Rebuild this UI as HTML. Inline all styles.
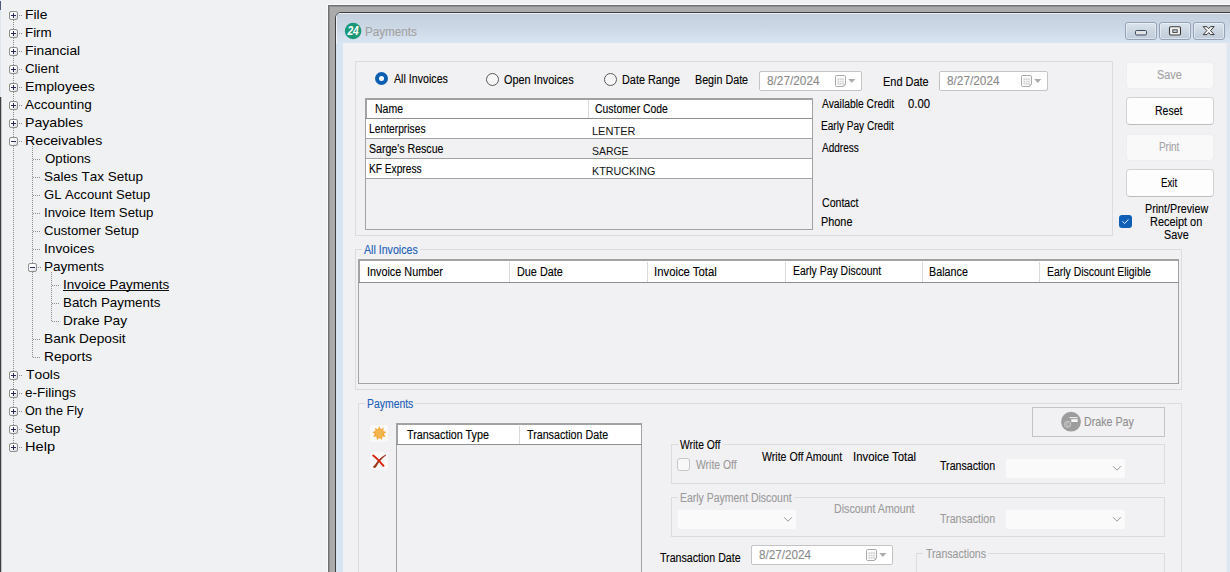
<!DOCTYPE html>
<html lang="en">
<head>
<meta charset="utf-8">
<title>Payments</title>
<style>
html,body{margin:0;padding:0}
body{width:1230px;height:572px;overflow:hidden;position:relative;background:#f0f1f3;font-family:"Liberation Sans",sans-serif}
*{box-sizing:border-box}
.abs,.t,.tr,.bx,.hd,.vd,.gb,.btn,.dp,.cb,.rad,.grid,.hl,.vl{position:absolute}
.t{white-space:nowrap;line-height:1;transform-origin:0 0;display:inline-block;-webkit-text-stroke:0.12px currentColor}
.tr{white-space:nowrap;line-height:1;font-size:13.33px;color:#111;font-kerning:none}
/* tree */
.bx{width:9px;height:9px;border:1px solid #8f8f8f;border-radius:2px;background:linear-gradient(135deg,#fff 0%,#fff 40%,#d8d8d8 100%)}
.bx .h{position:absolute;left:1px;top:3px;width:5px;height:1px;background:#2a2a5a}
.bx .v{position:absolute;left:3px;top:1px;width:1px;height:5px;background:#2a2a5a}
.hd{height:1px;background:repeating-linear-gradient(90deg,#8c8c8c 0 1px,transparent 1px 2px)}
.vd{width:1px;background:repeating-linear-gradient(180deg,#8c8c8c 0 1px,transparent 1px 2px)}
/* window */
#frame{left:328px;top:5px;width:910px;height:580px;background:#acabab;border:1px solid #707070;box-shadow:inset 0 0 0 1px #8e8e8e,-1px -1px 0 #fafafa}
#win{left:335px;top:12px;width:900px;height:570px;border:1px solid #3e3e3e;border-radius:6px 0 0 0;background:#d7e4f2;overflow:hidden}
#title{left:0;top:0;width:900px;height:31px;background:linear-gradient(180deg,#c3cfdc 0%,#cbd7e5 45%,#dbe6f4 100%);box-shadow:inset 1px 1px 0 rgba(255,255,255,.7)}
#client{left:343px;top:43px;width:884px;height:540px;background:#f1f1f3}
.gb{border:1px solid #dcdcdc}
.btn{border:1px solid #d2d2d2;border-bottom-color:#bdbdbd;border-radius:4px;background:#fdfdfd}
.btn.dis{background:#f9f9fa;border-color:#eeeef0}
.dp{border:1px solid #c4c4c4;border-radius:2px;background:#fff}
.combo{position:absolute;background:#fafafa;border-radius:2px}
.grid{border:1px solid #a2a2a2}
.hl{height:1px;background:#a2a2a2}
.vl{width:1px;background:#dadada}
.rad{width:13px;height:13px;border-radius:50%;border:1px solid #5a5a5a;background:#f6f6f6}
.rad.on{border:4px solid #0c5eb3;background:#fff}
.tb{position:absolute;top:22px;height:18px;border:1px solid #95a2b6;border-radius:3px;background:linear-gradient(180deg,#dbe4ee 0%,#cbd6e2 50%,#c0ccda 100%);box-shadow:inset 0 0 0 1px rgba(255,255,255,.45)}
</style>
</head>
<body>
<!-- left tree pane -->
<div class="abs" style="left:0;top:97px;width:2px;height:475px;background:linear-gradient(90deg,#3e3e3e 0 1px,#c4c4c6 1px 2px)"></div>
<div class="abs" style="left:0;top:10px;width:1px;height:87px;background:#dfe6ee"></div>
<div class="abs" style="left:0;top:1px;width:1px;height:9px;background:#4a5a78"></div>

<i class="vd" style="left:13px;top:20px;height:427px"></i>
<i class="vd" style="left:32px;top:146px;height:212px"></i>
<i class="vd" style="left:51px;top:272px;height:50px"></i>
<span class="bx" style="left:9px;top:11px"><i class="h"></i><i class="v"></i></span>
<i class="hd" style="left:19px;top:15px;width:4px"></i>
<span class="bx" style="left:9px;top:29px"><i class="h"></i><i class="v"></i></span>
<i class="hd" style="left:19px;top:33px;width:4px"></i>
<span class="bx" style="left:9px;top:47px"><i class="h"></i><i class="v"></i></span>
<i class="hd" style="left:19px;top:51px;width:4px"></i>
<span class="bx" style="left:9px;top:65px"><i class="h"></i><i class="v"></i></span>
<i class="hd" style="left:19px;top:69px;width:4px"></i>
<span class="bx" style="left:9px;top:83px"><i class="h"></i><i class="v"></i></span>
<i class="hd" style="left:19px;top:87px;width:4px"></i>
<span class="bx" style="left:9px;top:101px"><i class="h"></i><i class="v"></i></span>
<i class="hd" style="left:19px;top:105px;width:4px"></i>
<span class="bx" style="left:9px;top:119px"><i class="h"></i><i class="v"></i></span>
<i class="hd" style="left:19px;top:123px;width:4px"></i>
<span class="bx" style="left:9px;top:137px"><i class="h"></i></span>
<i class="hd" style="left:19px;top:141px;width:4px"></i>
<i class="hd" style="left:33px;top:159px;width:8px"></i>
<i class="hd" style="left:33px;top:177px;width:8px"></i>
<i class="hd" style="left:33px;top:195px;width:8px"></i>
<i class="hd" style="left:33px;top:213px;width:8px"></i>
<i class="hd" style="left:33px;top:231px;width:8px"></i>
<i class="hd" style="left:33px;top:249px;width:8px"></i>
<span class="bx" style="left:28px;top:263px"><i class="h"></i></span>
<i class="hd" style="left:38px;top:267px;width:4px"></i>
<i class="abs" style="left:63px;top:290px;width:106px;height:1px;background:#111"></i>
<i class="hd" style="left:52px;top:285px;width:8px"></i>
<i class="hd" style="left:52px;top:303px;width:8px"></i>
<i class="hd" style="left:52px;top:321px;width:8px"></i>
<i class="hd" style="left:33px;top:339px;width:8px"></i>
<i class="hd" style="left:33px;top:357px;width:8px"></i>
<span class="bx" style="left:9px;top:371px"><i class="h"></i><i class="v"></i></span>
<i class="hd" style="left:19px;top:375px;width:4px"></i>
<span class="bx" style="left:9px;top:389px"><i class="h"></i><i class="v"></i></span>
<i class="hd" style="left:19px;top:393px;width:4px"></i>
<span class="bx" style="left:9px;top:407px"><i class="h"></i><i class="v"></i></span>
<i class="hd" style="left:19px;top:411px;width:4px"></i>
<span class="bx" style="left:9px;top:425px"><i class="h"></i><i class="v"></i></span>
<i class="hd" style="left:19px;top:429px;width:4px"></i>
<span class="bx" style="left:9px;top:443px"><i class="h"></i><i class="v"></i></span>
<i class="hd" style="left:19px;top:447px;width:4px"></i>
<!-- window frame -->
<div id="frame" class="abs"></div>
<div id="win" class="abs"><div id="title" class="abs"></div></div>
<div id="client" class="abs"></div>
<div class="abs" style="left:1226px;top:43px;width:4px;height:529px;background:linear-gradient(90deg,#e9edf2 0 1px,#dfe6ee 1px 4px)"></div>
<!-- title bar icon + buttons -->
<svg class="abs" style="left:344px;top:22px" width="18" height="18" viewBox="0 0 18 18"><circle cx="9.100" cy="9" r="8.300" fill="#1a9877"/><text x="3.400" y="13.300" font-family="Liberation Sans, sans-serif" font-size="12.600" font-weight="bold" font-style="italic" fill="#fff" textLength="11.400" lengthAdjust="spacingAndGlyphs">24</text></svg>
<div class="tb" style="left:1125px;width:32px"><svg width="30" height="16" viewBox="0 0 30 16" style="position:absolute;left:0;top:0"><rect x="9.500" y="7.500" width="11" height="4.500" rx="1.200" fill="#e2e4e4" stroke="#3b4663" stroke-width="1"/></svg></div>
<div class="tb" style="left:1159px;width:32px"><svg width="30" height="16" viewBox="0 0 30 16" style="position:absolute;left:0;top:0"><rect x="9.5" y="3.8" width="11" height="8.2" rx="1.2" fill="#f2f2f2" stroke="#3a3a3a" stroke-width="1.1"/><rect x="12.8" y="6.8" width="4.4" height="2.6" fill="#c9d3de" stroke="#3a3a3a" stroke-width="0.9"/></svg></div>
<div class="tb" style="left:1193px;width:32px"><svg width="30" height="16" viewBox="0 0 30 16" style="position:absolute;left:0;top:0"><path d="M9.200 3.600h3.700l1.800 2 1.800-2h3.700l-3.700 4 3.700 4h-3.700l-1.800-2-1.800 2H9.200l3.700-4z" fill="#f6f6f6" stroke="#3a3a3a" stroke-width="1" stroke-linejoin="round"/></svg></div>

<!-- group box 1 -->
<div class="gb" style="left:355px;top:61px;width:758px;height:175px"></div>
<div class="rad on" style="left:375px;top:72px"></div>
<div class="rad" style="left:486px;top:73px"></div>
<div class="rad" style="left:604px;top:73px"></div>
<div class="dp" style="left:759px;top:71px;width:103px;height:20px"></div>
<div class="dp" style="left:939px;top:71px;width:109px;height:20px"></div>
<svg class="abs cal" style="left:834px;top:74px" width="24" height="14" viewBox="0 0 24 14"><path d="M2.700 1.500h7.600a1.200 1.200 0 0 1 1.200 1.200v7.800l-2 2h-6.800a1.200 1.200 0 0 1-1.200-1.200v-8.600a1.200 1.200 0 0 1 1.200-1.200z" fill="#fcfcfc" stroke="#aaaaaa" stroke-width="1"/><path d="M11.500 10.500h-2v2" fill="none" stroke="#c4c4c4" stroke-width="0.800"/><rect x="3.600" y="4.400" width="6.200" height="6.200" fill="#d0d0d0"/><path d="M5.700 4.400v6.200M7.800 4.400v6.200M3.600 6.500h6.200M3.600 8.600h6.200" stroke="#fcfcfc" stroke-width="0.700" fill="none"/><path d="M14.200 5h7.200l-3.600 3.900z" fill="#adadad"/></svg>
<svg class="abs cal" style="left:1020px;top:74px" width="24" height="14" viewBox="0 0 24 14"><path d="M2.700 1.500h7.600a1.200 1.200 0 0 1 1.200 1.200v7.800l-2 2h-6.800a1.200 1.200 0 0 1-1.200-1.200v-8.600a1.200 1.200 0 0 1 1.200-1.200z" fill="#fcfcfc" stroke="#aaaaaa" stroke-width="1"/><path d="M11.500 10.500h-2v2" fill="none" stroke="#c4c4c4" stroke-width="0.800"/><rect x="3.600" y="4.400" width="6.200" height="6.200" fill="#d0d0d0"/><path d="M5.700 4.400v6.200M7.800 4.400v6.200M3.600 6.500h6.200M3.600 8.600h6.200" stroke="#fcfcfc" stroke-width="0.700" fill="none"/><path d="M14.200 5h7.200l-3.600 3.900z" fill="#adadad"/></svg>


<!-- customer grid -->
<div class="grid" style="left:365px;top:98px;width:448px;height:132px"></div>
<div class="abs" style="left:366px;top:99px;width:446px;height:80px;background:#fff"></div>
<div class="abs" style="left:366px;top:139px;width:446px;height:19px;background:#f1f1f4"></div>
<div class="abs" style="left:365px;top:98px;width:448px;height:2px;background:#a2a2a2"></div>
<div class="abs" style="left:365px;top:98px;width:2px;height:21px;background:#a2a2a2"></div>
<div class="hl" style="left:365px;top:118px;width:448px;background:#8f8f8f"></div>
<div class="hl" style="left:365px;top:138px;width:448px"></div>
<div class="hl" style="left:365px;top:158px;width:448px"></div>
<div class="hl" style="left:365px;top:178px;width:448px"></div>
<div class="vl" style="left:588px;top:100px;height:18px"></div>

<!-- right buttons -->
<div class="btn dis" style="left:1126px;top:62px;width:88px;height:27px"></div>
<div class="btn" style="left:1126px;top:97px;width:88px;height:28px"></div>
<div class="btn dis" style="left:1126px;top:134px;width:88px;height:27px"></div>
<div class="btn" style="left:1126px;top:169px;width:88px;height:28px"></div>
<svg class="abs" style="left:1119px;top:215px" width="13" height="13" viewBox="0 0 13 13"><rect width="13" height="13" rx="3" fill="#0f5fb6"/><path d="M3.700 6.600l1.900 1.900 3.600-3.800" fill="none" stroke="#fff" stroke-width="0.900" stroke-linecap="round" stroke-linejoin="round"/></svg>

<!-- All Invoices group -->
<div class="gb" style="left:355px;top:249px;width:827px;height:141px"></div>
<div class="abs" style="left:362px;top:246px;width:58px;height:8px;background:#f1f1f3"></div>
<div class="grid" style="left:358px;top:260px;width:821px;height:124px"></div>
<div class="abs" style="left:359px;top:261px;width:819px;height:21px;background:#fff"></div>
<div class="abs" style="left:358px;top:259px;width:821px;height:2px;background:#a2a2a2"></div>
<div class="abs" style="left:358px;top:259px;width:2px;height:24px;background:#a2a2a2"></div>
<div class="hl" style="left:358px;top:282px;width:821px;background:#8f8f8f"></div>
<div class="vl" style="left:509px;top:262px;height:20px"></div>
<div class="vl" style="left:647px;top:262px;height:20px"></div>
<div class="vl" style="left:785px;top:262px;height:20px"></div>
<div class="vl" style="left:922px;top:262px;height:20px"></div>
<div class="vl" style="left:1039px;top:262px;height:20px"></div>

<!-- Payments group -->
<div class="gb" style="left:358px;top:403px;width:824px;height:200px"></div>
<div class="abs" style="left:365px;top:400px;width:50px;height:8px;background:#f1f1f3"></div>
<div class="abs" style="left:370px;top:425px;width:18px;height:17px;background:#f9f9f9;border-radius:3px"></div>
<div class="abs" style="left:370px;top:452px;width:18px;height:18px;background:#f9f9f9;border-radius:3px"></div>
<svg class="abs" style="left:371px;top:425px" width="17" height="17" viewBox="0 0 17 17"><path d="M8.3 1.2l1.5 3 3-1.4-.6 3.2 3.2.9-2.6 2 1.8 2.8-3.3-.2-.3 3.3-2.6-2.1-2.5 2.200-.5-3.300-3.300.2 1.800-2.800-2.600-2 3.200-.9-.6-3.200 3 1.400z" fill="#f3a63a"/><circle cx="8.3" cy="8.300" r="3.600" fill="#f6b64e"/></svg>
<svg class="abs" style="left:371px;top:453px" width="17" height="17" viewBox="0 0 17 17"><path d="M14.800 1.600C11.500 3 7.500 6.500 5 10.200 4 11.800 3 13 2 13.600c.3 1.600 2 1.600 2.900.6 1-1.300 1.700-2.700 2.700-4.200 1.900-2.800 4.700-5.800 7.400-7.600z" fill="#a0361c"/><path d="M2.200 2.500c2.600 1.600 5.800 5.200 10.300 10.300" fill="none" stroke="#d8240c" stroke-width="2" stroke-linecap="round"/></svg>
<div class="grid" style="left:396px;top:424px;width:246px;height:170px"></div>
<div class="abs" style="left:397px;top:425px;width:244px;height:19px;background:#fff"></div>
<div class="abs" style="left:396px;top:423px;width:246px;height:2px;background:#a2a2a2"></div>
<div class="abs" style="left:396px;top:423px;width:2px;height:22px;background:#a2a2a2"></div>
<div class="hl" style="left:396px;top:444px;width:246px;background:#8f8f8f"></div>
<div class="vl" style="left:519px;top:426px;height:18px"></div>

<!-- Drake Pay button -->
<div class="abs" style="left:1032px;top:407px;width:133px;height:30px;border:1px solid #c4c4c4"></div>
<svg class="abs" style="left:1061px;top:411px" width="20" height="21" viewBox="0 0 20 21"><circle cx="10" cy="10.700" r="9.900" fill="#9c9c9c"/><rect x="8.500" y="6.100" width="8.200" height="1.100" fill="#f0f0f0"/><rect x="10.300" y="8.200" width="6.400" height="2.800" fill="#f6f6f6"/><circle cx="6.600" cy="13.300" r="3.100" fill="#a4a4a4" stroke="#cfcfcf" stroke-width="0.900"/><path d="M7.600 11.800c-1.400-.5-2.300.400-2.300 1.500s.9 2 2.300 1.500" fill="none" stroke="#d6d6d6" stroke-width="0.700"/></svg>

<!-- Write Off group -->
<div class="gb" style="left:671px;top:444px;width:494px;height:40px"></div>
<div class="abs" style="left:678px;top:441px;width:45px;height:8px;background:#f1f1f3"></div>
<div class="abs" style="left:677px;top:458px;width:13px;height:13px;border:1px solid #c6c6c6;border-radius:3px;background:#f8f8f8"></div>
<div class="combo" style="left:1006px;top:459px;width:119px;height:19px"></div>
<svg class="abs" style="left:1112px;top:465px" width="10" height="7" viewBox="0 0 10 7"><path d="M1 1.200l4 4 4-4" fill="none" stroke="#9a9a9a" stroke-width="1"/></svg>

<!-- Early Payment Discount group -->
<div class="gb" style="left:671px;top:497px;width:494px;height:40px"></div>
<div class="abs" style="left:678px;top:494px;width:116px;height:8px;background:#f1f1f3"></div>
<div class="combo" style="left:678px;top:510px;width:118px;height:19px"></div>
<svg class="abs" style="left:783px;top:516px" width="10" height="7" viewBox="0 0 10 7"><path d="M1 1.200l4 4 4-4" fill="none" stroke="#9a9a9a" stroke-width="1"/></svg>
<div class="combo" style="left:1006px;top:510px;width:119px;height:19px"></div>
<svg class="abs" style="left:1112px;top:516px" width="10" height="7" viewBox="0 0 10 7"><path d="M1 1.200l4 4 4-4" fill="none" stroke="#9a9a9a" stroke-width="1"/></svg>

<!-- Transaction date + Transactions group -->
<div class="dp" style="left:751px;top:545px;width:142px;height:20px"></div>
<svg class="abs cal" style="left:865px;top:548px" width="24" height="14" viewBox="0 0 24 14"><path d="M2.700 1.500h7.600a1.200 1.200 0 0 1 1.200 1.200v7.800l-2 2h-6.800a1.200 1.200 0 0 1-1.200-1.200v-8.600a1.200 1.200 0 0 1 1.200-1.200z" fill="#fcfcfc" stroke="#aaaaaa" stroke-width="1"/><path d="M11.500 10.500h-2v2" fill="none" stroke="#c4c4c4" stroke-width="0.800"/><rect x="3.600" y="4.400" width="6.200" height="6.200" fill="#d0d0d0"/><path d="M5.700 4.400v6.200M7.800 4.400v6.200M3.600 6.500h6.200M3.600 8.600h6.200" stroke="#fcfcfc" stroke-width="0.700" fill="none"/><path d="M14.200 5h7.200l-3.600 3.900z" fill="#adadad"/></svg>
<div class="gb" style="left:916px;top:553px;width:249px;height:40px"></div>
<div class="abs" style="left:923px;top:550px;width:65px;height:8px;background:#f1f1f3"></div>

<span class="t" style="left:364.8px;top:25px;font-size:12px;line-height:14px;color:#a2a2a2;transform:scaleX(0.9712);">Payments</span>
<span class="t" style="left:394.0px;top:72px;font-size:12.5px;line-height:14px;color:#000;transform:scaleX(0.8526);">All Invoices</span>
<span class="t" style="left:504.1px;top:73px;font-size:12.5px;line-height:14px;color:#000;transform:scaleX(0.8709);">Open Invoices</span>
<span class="t" style="left:622.4px;top:73px;font-size:12.5px;line-height:14px;color:#000;transform:scaleX(0.8690);">Date Range</span>
<span class="t" style="left:695.4px;top:73px;font-size:12.5px;line-height:14px;color:#000;transform:scaleX(0.8581);">Begin Date</span>
<span class="t" style="left:766.5px;top:74px;font-size:12px;line-height:14px;color:#8a8a8a;transform:scaleX(0.9848);">8/27/2024</span>
<span class="t" style="left:883.1px;top:75px;font-size:12.5px;line-height:14px;color:#000;transform:scaleX(0.8772);">End Date</span>
<span class="t" style="left:946.5px;top:74px;font-size:12px;line-height:14px;color:#8a8a8a;transform:scaleX(0.9848);">8/27/2024</span>
<span class="t" style="left:374.5px;top:102px;font-size:12.5px;line-height:14px;color:#000;transform:scaleX(0.8409);">Name</span>
<span class="t" style="left:595.1px;top:102px;font-size:12.5px;line-height:14px;color:#000;transform:scaleX(0.8324);">Customer Code</span>
<span class="t" style="left:368.9px;top:122px;font-size:12.5px;line-height:14px;color:#000;transform:scaleX(0.8223);">Lenterprises</span>
<span class="t" style="left:369.1px;top:142px;font-size:12.5px;line-height:14px;color:#000;transform:scaleX(0.8474);">Sarge&#x27;s Rescue</span>
<span class="t" style="left:368.9px;top:162px;font-size:12.5px;line-height:14px;color:#000;transform:scaleX(0.8142);">KF Express</span>
<span class="t" style="left:591.6px;top:125px;font-size:11.6px;line-height:12px;color:#111;transform:scaleX(0.9492);-webkit-text-stroke:0;">LENTER</span>
<span class="t" style="left:592.0px;top:145px;font-size:11.6px;line-height:12px;color:#111;transform:scaleX(0.9006);-webkit-text-stroke:0;">SARGE</span>
<span class="t" style="left:591.6px;top:165px;font-size:11.6px;line-height:12px;color:#111;transform:scaleX(0.9278);-webkit-text-stroke:0;">KTRUCKING</span>
<span class="t" style="left:822.0px;top:97px;font-size:12.5px;line-height:14px;color:#000;transform:scaleX(0.8252);">Available Credit</span>
<span class="t" style="left:907.5px;top:97px;font-size:12.5px;line-height:14px;color:#000;transform:scaleX(0.9032);">0.00</span>
<span class="t" style="left:821.2px;top:119px;font-size:12.5px;line-height:14px;color:#000;transform:scaleX(0.8067);">Early Pay Credit</span>
<span class="t" style="left:822.0px;top:141px;font-size:12.5px;line-height:14px;color:#000;transform:scaleX(0.8022);">Address</span>
<span class="t" style="left:821.6px;top:196px;font-size:12.5px;line-height:14px;color:#000;transform:scaleX(0.8471);">Contact</span>
<span class="t" style="left:821.1px;top:215px;font-size:12.5px;line-height:14px;color:#000;transform:scaleX(0.8696);">Phone</span>
<span class="t" style="left:1156.6px;top:68px;font-size:12.5px;line-height:14px;color:#a3a3a3;transform:scaleX(0.8697);">Save</span>
<span class="t" style="left:1154.7px;top:104px;font-size:12.5px;line-height:14px;color:#000;transform:scaleX(0.8413);">Reset</span>
<span class="t" style="left:1158.6px;top:140px;font-size:12.5px;line-height:14px;color:#a3a3a3;transform:scaleX(0.7919);">Print</span>
<span class="t" style="left:1160.8px;top:176px;font-size:12.5px;line-height:14px;color:#000;transform:scaleX(0.7797);">Exit</span>
<span class="t" style="left:1144.7px;top:202px;font-size:12.5px;line-height:14px;color:#000;transform:scaleX(0.8577);">Print/Preview</span>
<span class="t" style="left:1150.4px;top:215px;font-size:12.5px;line-height:14px;color:#000;transform:scaleX(0.8741);">Receipt on</span>
<span class="t" style="left:1163.8px;top:228px;font-size:12.5px;line-height:14px;color:#000;transform:scaleX(0.8661);">Save</span>
<span class="t" style="left:364.2px;top:243px;font-size:12.5px;line-height:14px;color:#2060b8;transform:scaleX(0.8494);">All Invoices</span>
<span class="t" style="left:367.2px;top:265px;font-size:12.5px;line-height:14px;color:#000;transform:scaleX(0.8663);">Invoice Number</span>
<span class="t" style="left:516.6px;top:265px;font-size:12.5px;line-height:14px;color:#000;transform:scaleX(0.8683);">Due Date</span>
<span class="t" style="left:654.2px;top:265px;font-size:12.5px;line-height:14px;color:#000;transform:scaleX(0.9071);">Invoice Total</span>
<span class="t" style="left:792.9px;top:264px;font-size:12.5px;line-height:14px;color:#000;transform:scaleX(0.8354);">Early Pay Discount</span>
<span class="t" style="left:929.4px;top:265px;font-size:12.5px;line-height:14px;color:#000;transform:scaleX(0.8617);">Balance</span>
<span class="t" style="left:1046.7px;top:265px;font-size:12.5px;line-height:14px;color:#000;transform:scaleX(0.8350);">Early Discount Eligible</span>
<span class="t" style="left:366.7px;top:397px;font-size:12.5px;line-height:14px;color:#2060b8;transform:scaleX(0.8333);">Payments</span>
<span class="t" style="left:406.5px;top:428px;font-size:12.5px;line-height:14px;color:#000;transform:scaleX(0.8603);">Transaction Type</span>
<span class="t" style="left:527.3px;top:428px;font-size:12.5px;line-height:14px;color:#000;transform:scaleX(0.8564);">Transaction Date</span>
<span class="t" style="left:1083.9px;top:414px;font-size:13.3px;line-height:15px;color:#8f8f8f;transform:scaleX(0.8033);">Drake Pay</span>
<span class="t" style="left:680.3px;top:438px;font-size:12.5px;line-height:14px;color:#000;transform:scaleX(0.8265);">Write Off</span>
<span class="t" style="left:696.3px;top:458px;font-size:12.5px;line-height:14px;color:#9b9b9b;transform:scaleX(0.8306);">Write Off</span>
<span class="t" style="left:762.0px;top:450px;font-size:12.5px;line-height:14px;color:#000;transform:scaleX(0.8464);">Write Off Amount</span>
<span class="t" style="left:853.1px;top:450px;font-size:12.5px;line-height:14px;color:#000;transform:scaleX(0.9115);">Invoice Total</span>
<span class="t" style="left:939.8px;top:459px;font-size:12.5px;line-height:14px;color:#000;transform:scaleX(0.8502);">Transaction</span>
<span class="t" style="left:679.7px;top:491px;font-size:12.5px;line-height:14px;color:#9b9b9b;transform:scaleX(0.8371);">Early Payment Discount</span>
<span class="t" style="left:834.4px;top:502px;font-size:12.5px;line-height:14px;color:#9b9b9b;transform:scaleX(0.8524);">Discount Amount</span>
<span class="t" style="left:939.8px;top:512px;font-size:12.5px;line-height:14px;color:#9b9b9b;transform:scaleX(0.8502);">Transaction</span>
<span class="t" style="left:659.8px;top:551px;font-size:12.5px;line-height:14px;color:#000;transform:scaleX(0.8511);">Transaction Date</span>
<span class="t" style="left:759.2px;top:548px;font-size:12px;line-height:14px;color:#8a8a8a;transform:scaleX(0.9733);">8/27/2024</span>
<span class="t" style="left:925.6px;top:547px;font-size:12.5px;line-height:14px;color:#9b9b9b;transform:scaleX(0.8440);">Transactions</span>
<span class="t" style="left:25.0px;top:7px;font-size:13.33px;line-height:15px;color:#000;transform:scaleX(1.0400);font-kerning:none;-webkit-text-stroke:0;">File</span>
<span class="t" style="left:25.0px;top:25px;font-size:13.33px;line-height:15px;color:#000;transform:scaleX(1.0020);font-kerning:none;-webkit-text-stroke:0;">Firm</span>
<span class="t" style="left:25.0px;top:43px;font-size:13.33px;line-height:15px;color:#000;transform:scaleX(1.0330);font-kerning:none;-webkit-text-stroke:0;">Financial</span>
<span class="t" style="left:25.0px;top:61px;font-size:13.33px;line-height:15px;color:#000;transform:scaleX(0.9985);font-kerning:none;-webkit-text-stroke:0;">Client</span>
<span class="t" style="left:25.0px;top:79px;font-size:13.33px;line-height:15px;color:#000;transform:scaleX(1.0574);font-kerning:none;-webkit-text-stroke:0;">Employees</span>
<span class="t" style="left:25.0px;top:97px;font-size:13.33px;line-height:15px;color:#000;transform:scaleX(1.0123);font-kerning:none;-webkit-text-stroke:0;">Accounting</span>
<span class="t" style="left:25.0px;top:115px;font-size:13.33px;line-height:15px;color:#000;transform:scaleX(1.0598);font-kerning:none;-webkit-text-stroke:0;">Payables</span>
<span class="t" style="left:25.0px;top:133px;font-size:13.33px;line-height:15px;color:#000;transform:scaleX(1.0639);font-kerning:none;-webkit-text-stroke:0;">Receivables</span>
<span class="t" style="left:45.0px;top:151px;font-size:13.33px;line-height:15px;color:#000;transform:scaleX(0.9956);font-kerning:none;-webkit-text-stroke:0;">Options</span>
<span class="t" style="left:44.0px;top:169px;font-size:13.33px;line-height:15px;color:#000;transform:scaleX(1.0135);font-kerning:none;-webkit-text-stroke:0;">Sales Tax Setup</span>
<span class="t" style="left:44.0px;top:187px;font-size:13.33px;line-height:15px;color:#000;transform:scaleX(0.9817);font-kerning:none;-webkit-text-stroke:0;">GL Account Setup</span>
<span class="t" style="left:44.0px;top:205px;font-size:13.33px;line-height:15px;color:#000;transform:scaleX(0.9908);font-kerning:none;-webkit-text-stroke:0;">Invoice Item Setup</span>
<span class="t" style="left:44.0px;top:223px;font-size:13.33px;line-height:15px;color:#000;transform:scaleX(0.9853);font-kerning:none;-webkit-text-stroke:0;">Customer Setup</span>
<span class="t" style="left:44.0px;top:241px;font-size:13.33px;line-height:15px;color:#000;transform:scaleX(1.0286);font-kerning:none;-webkit-text-stroke:0;">Invoices</span>
<span class="t" style="left:44.0px;top:259px;font-size:13.33px;line-height:15px;color:#000;transform:scaleX(1.0147);font-kerning:none;-webkit-text-stroke:0;">Payments</span>
<span class="t" style="left:63.0px;top:277px;font-size:13.33px;line-height:15px;color:#000;transform:scaleX(1.0106);font-kerning:none;-webkit-text-stroke:0;">Invoice Payments</span>
<span class="t" style="left:63.0px;top:295px;font-size:13.33px;line-height:15px;color:#000;transform:scaleX(1.0031);font-kerning:none;-webkit-text-stroke:0;">Batch Payments</span>
<span class="t" style="left:63.0px;top:313px;font-size:13.33px;line-height:15px;color:#000;transform:scaleX(1.0286);font-kerning:none;-webkit-text-stroke:0;">Drake Pay</span>
<span class="t" style="left:44.0px;top:331px;font-size:13.33px;line-height:15px;color:#000;transform:scaleX(1.0300);font-kerning:none;-webkit-text-stroke:0;">Bank Deposit</span>
<span class="t" style="left:44.0px;top:349px;font-size:13.33px;line-height:15px;color:#000;transform:scaleX(1.0298);font-kerning:none;-webkit-text-stroke:0;">Reports</span>
<span class="t" style="left:26.0px;top:367px;font-size:13.33px;line-height:15px;color:#000;transform:scaleX(1.0375);font-kerning:none;-webkit-text-stroke:0;">Tools</span>
<span class="t" style="left:25.0px;top:385px;font-size:13.33px;line-height:15px;color:#000;transform:scaleX(1.0101);font-kerning:none;-webkit-text-stroke:0;">e-Filings</span>
<span class="t" style="left:25.0px;top:403px;font-size:13.33px;line-height:15px;color:#000;transform:scaleX(0.9475);font-kerning:none;-webkit-text-stroke:0;">On the Fly</span>
<span class="t" style="left:25.0px;top:421px;font-size:13.33px;line-height:15px;color:#000;transform:scaleX(1.0149);font-kerning:none;-webkit-text-stroke:0;">Setup</span>
<span class="t" style="left:25.0px;top:439px;font-size:13.33px;line-height:15px;color:#000;transform:scaleX(1.0951);font-kerning:none;-webkit-text-stroke:0;">Help</span>
</body>
</html>
